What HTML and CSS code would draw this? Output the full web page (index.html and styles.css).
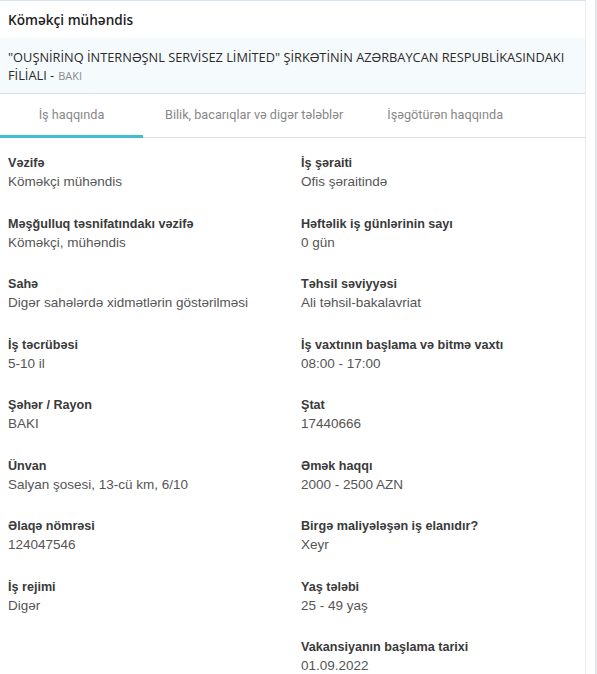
FILE: index.html
```html
<!DOCTYPE html>
<html lang="az">
<head>
<meta charset="utf-8">
<title>Köməkçi mühəndis</title>
<link rel="stylesheet" href="styles.css">
</head>
<body>
<div class="page">
  <main class="card">
    <h1 class="card-title">Köməkçi mühəndis</h1>
    <div class="company">"OUŞNİRİNQ İNTERNƏŞNL SERVİSEZ LİMİTED" ŞİRKƏTİNİN AZƏRBAYCAN RESPUBLİKASINDAKI<br>FİLİALI -<span class="company-city">BAKI</span></div>
    <nav class="tabs">
      <a class="tab tab-active">İş haqqında</a>
      <a class="tab">Bilik, bacarıqlar və digər tələblər</a>
      <a class="tab">İşəgötürən haqqında</a>
    </nav>
    <section class="details">
      <div class="field"><div class="label">Vəzifə</div><div class="value">Köməkçi mühəndis</div></div>
      <div class="field"><div class="label">İş şəraiti</div><div class="value">Ofis şəraitində</div></div>
      <div class="field"><div class="label">Məşğulluq təsnifatındakı vəzifə</div><div class="value">Köməkçi, mühəndis</div></div>
      <div class="field"><div class="label">Həftəlik iş günlərinin sayı</div><div class="value">0 gün</div></div>
      <div class="field"><div class="label">Sahə</div><div class="value">Digər sahələrdə xidmətlərin göstərilməsi</div></div>
      <div class="field"><div class="label">Təhsil səviyyəsi</div><div class="value">Ali təhsil-bakalavriat</div></div>
      <div class="field"><div class="label">İş təcrübəsi</div><div class="value">5-10 il</div></div>
      <div class="field"><div class="label">İş vaxtının başlama və bitmə vaxtı</div><div class="value">08:00 - 17:00</div></div>
      <div class="field"><div class="label">Şəhər / Rayon</div><div class="value">BAKI</div></div>
      <div class="field"><div class="label">Ştat</div><div class="value">17440666</div></div>
      <div class="field"><div class="label">Ünvan</div><div class="value">Salyan şosesi, 13-cü km, 6/10</div></div>
      <div class="field"><div class="label">Əmək haqqı</div><div class="value">2000 - 2500 AZN</div></div>
      <div class="field"><div class="label">Əlaqə nömrəsi</div><div class="value">124047546</div></div>
      <div class="field"><div class="label">Birgə maliyələşən iş elanıdır?</div><div class="value">Xeyr</div></div>
      <div class="field"><div class="label">İş rejimi</div><div class="value">Digər</div></div>
      <div class="field"><div class="label">Yaş tələbi</div><div class="value">25 - 49 yaş</div></div>
      <div class="field field-empty"></div>
      <div class="field"><div class="label">Vakansiyanın başlama tarixi</div><div class="value">01.09.2022</div></div>
    </section>
  </main>
  <div class="edge"></div>
</div>
</body>
</html>
```

FILE: styles.css
```css
html, body {
  margin: 0;
  padding: 0;
  background: #fff;
  overflow: hidden;
}

.page {
  display: flex;
  min-height: 100vh;
}

.card {
  flex: none;
  width: 586px;
  box-sizing: border-box;
  border-top: 1px solid #d5e5ef;
  border-right: 1px solid #e6ecf0;
}

.edge {
  margin-left: auto;
  width: 2px;
  background: #e4e8e9;
}

.card-title {
  margin: 0;
  padding: 9px 8px 0;
  height: 28px;
  font-family: "Open Sans", sans-serif;
  font-size: 13.6px;
  font-weight: 600;
  line-height: 20px;
  color: #1f1f1f;
}

.company {
  background: #f5fafd;
  border-bottom: 1px solid #dde2e5;
  padding: 10px 8px 8px;
  font-family: "Open Sans", sans-serif;
  font-size: 12.8px;
  line-height: 18px;
  color: #2b2b2b;
}

.company-city {
  margin-left: 4px;
  font-size: 11px;
  color: #8a8a8a;
}

.tabs {
  display: flex;
  border-bottom: 1px solid #e0e0e0;
}

.tab {
  min-width: 143px;
  box-sizing: border-box;
  padding: 12px 22px 11px;
  text-align: center;
  font-family: Roboto, sans-serif;
  font-size: 12.7px;
  line-height: 18px;
  color: #888;
  border-bottom: 3px solid transparent;
  margin-bottom: -1px;
}

.tab-active {
  border-bottom-color: #3fbfd0;
}

.details {
  display: grid;
  grid-template-columns: 293px 1fr;
  padding: 16px 8px 0;
  font-family: "Liberation Sans", Arial, sans-serif;
}

.field {
  height: 60.5px;
}

.label {
  font-size: 12.6px;
  font-weight: bold;
  line-height: 18px;
  color: #3a3a3a;
}

.value {
  font-size: 13.5px;
  line-height: 20px;
  color: #555;
}
```
